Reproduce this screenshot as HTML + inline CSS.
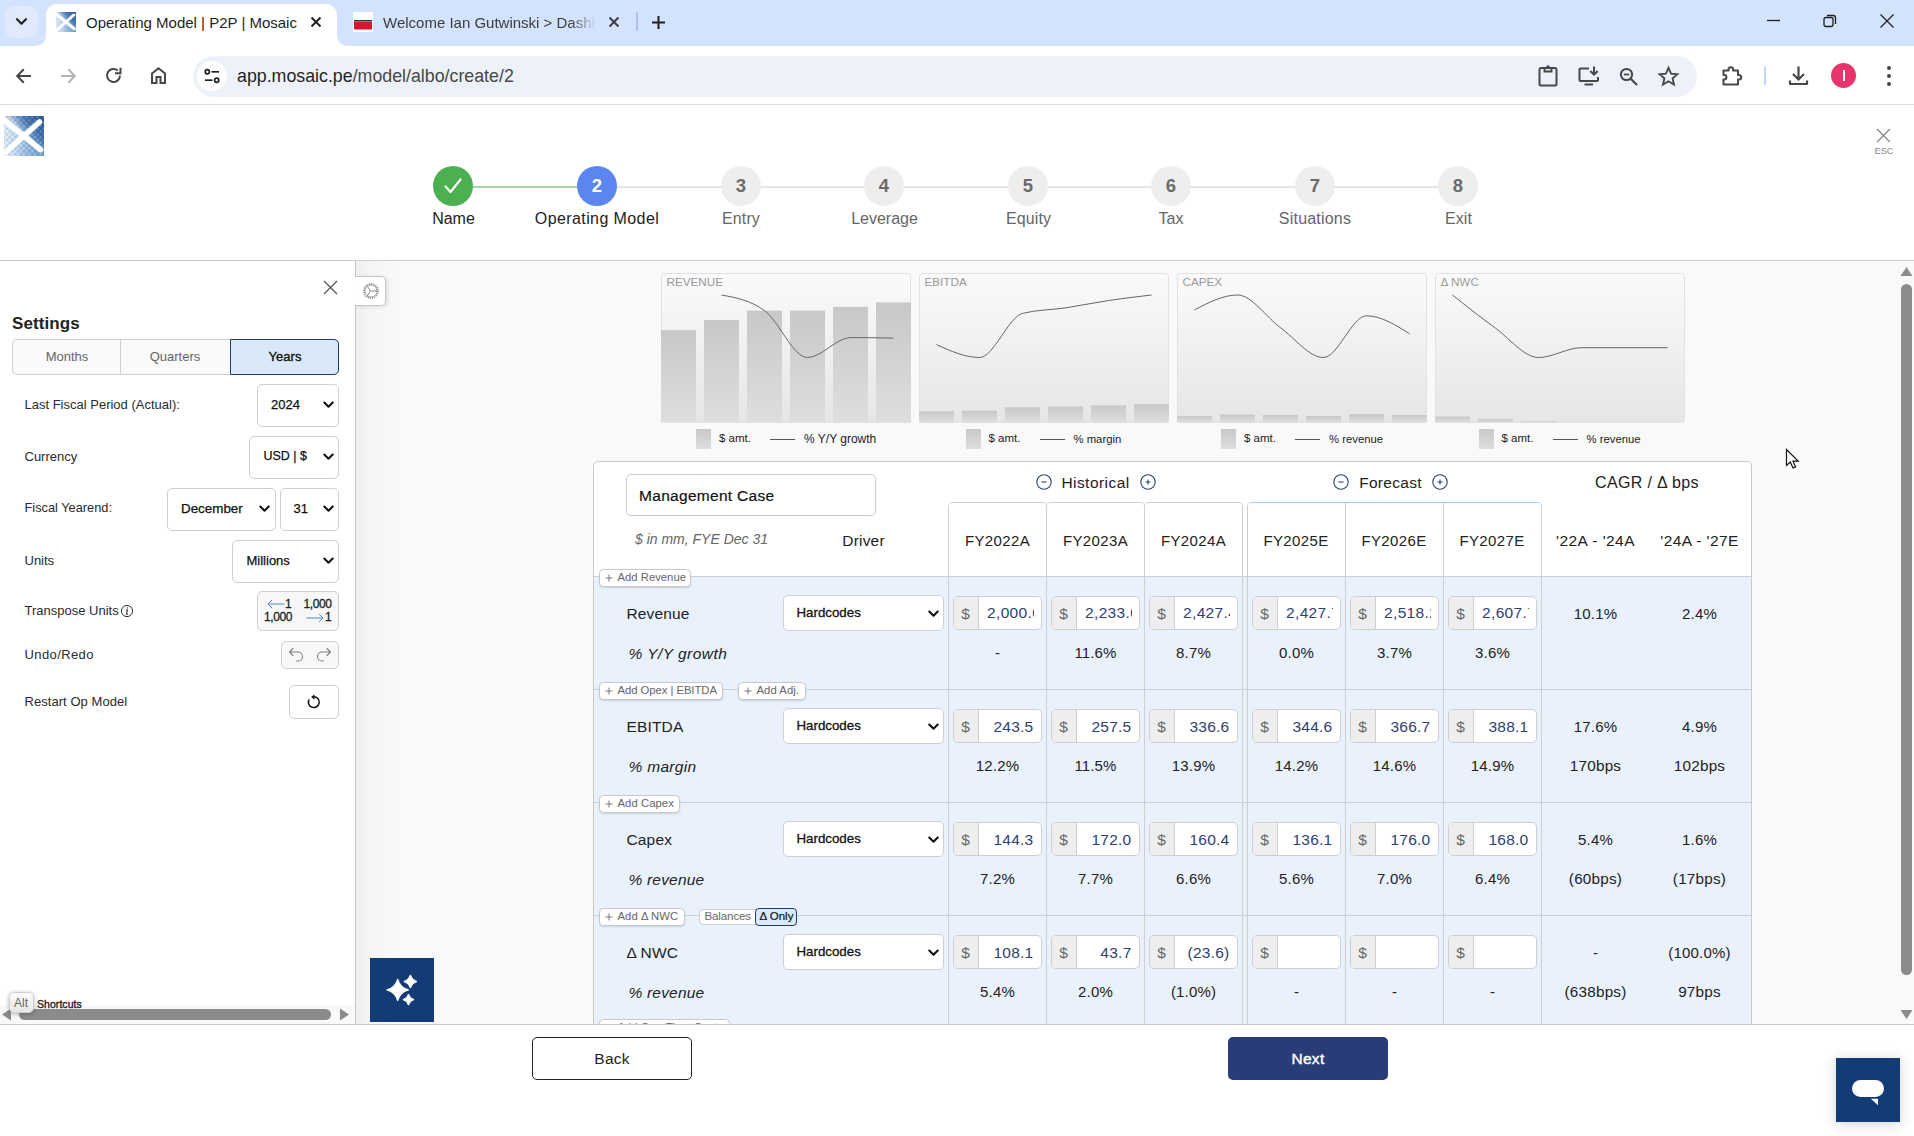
<!DOCTYPE html>
<html>
<head>
<meta charset="utf-8">
<title>Operating Model | P2P | Mosaic</title>
<style>
*{box-sizing:border-box;margin:0;padding:0}
html,body{width:1914px;height:1136px;overflow:hidden;background:#fff;font-family:"Liberation Sans",sans-serif;color:#222}
.abs{position:absolute}
#root{position:relative;width:1914px;height:1136px;overflow:hidden}
.t{position:absolute;white-space:nowrap;line-height:1}
.c{transform:translateX(-50%)}
/* chrome */
#tabbar{left:0;top:0;width:1914px;height:46px;background:#d3e3fd}
#toolbar{left:0;top:46.500px;width:1914px;height:58px;background:#fff;border-radius:0 9px 0 0}
#tbline{left:0;top:104px;width:1914px;height:1px;background:#dcdcdc}
#omni{left:193px;top:56px;width:1504px;height:41px;border-radius:21px;background:#edf2fa}
/* app */
#hdrline{left:0;top:259.500px;width:1914px;height:1.500px;background:#cbcbcb}
#main{left:356px;top:261px;width:1558px;height:763px;background:linear-gradient(90deg,#efefef 0,#f5f5f5 14px,#f9f9f9 40px);overflow:hidden}
#left{left:0;top:261px;width:356px;height:763px;background:#fff;border-right:1px solid #c4c4c4;overflow:hidden}
#botline{left:0;top:1024px;width:1914px;height:1px;background:#c8c8c8}
#bottom{left:0;top:1025px;width:1914px;height:111px;background:#fff}
.sel{position:absolute;border:1px solid #cfcfcf;border-radius:5px;background:#fff}
</style>
</head>
<body>
<div id="root">

<!-- ================= BROWSER CHROME ================= -->
<div id="tabbar" class="abs"></div>
<div id="toolbar" class="abs"></div>
<div id="tbline" class="abs"></div>
<div id="omni" class="abs"></div>
<!--CHROME_START-->
<!-- tab search chevron -->
<div class="abs" style="left:5px;top:6px;width:33px;height:32px;border-radius:9px;background:#e1eafc"></div>
<svg class="abs" style="left:15px;top:16px" width="13" height="12" viewBox="0 0 13 12"><path d="M2 3.2 L6.5 7.7 L11 3.2" fill="none" stroke="#1f1f1f" stroke-width="2.1" stroke-linecap="round" stroke-linejoin="round"/></svg>
<!-- active tab -->
<div class="abs" style="left:46px;top:4px;width:291px;height:43px;background:#fff;border-radius:11px 11px 0 0"></div>
<svg class="abs" style="left:36px;top:36px" width="10" height="10" viewBox="0 0 10 10"><path d="M10 0 V10 H0 A10 10 0 0 0 10 0Z" fill="#fff"/></svg>
<svg class="abs" style="left:337px;top:36px" width="10" height="10" viewBox="0 0 10 10"><path d="M0 0 V10 H10 A10 10 0 0 1 0 0Z" fill="#fff"/></svg>
<!-- favicon 1 (mosaic X) -->
<svg class="abs" style="left:56px;top:12px" width="20" height="20" viewBox="0 0 40 40"><rect width="40" height="40" fill="url(#lg1)"/><rect width="40" height="40" fill="url(#lg2)"/><rect width="40" height="40" fill="url(#mos)"/><path d="M0 4 L36.500 33.500" stroke="#fff" stroke-width="6" stroke-linecap="round"/><path d="M35.500 6 L1.500 36.500" stroke="#fff" stroke-width="6" stroke-linecap="round"/></svg>
<div class="t" style="left:86px;top:15px;font-size:15px;color:#1f1f1f">Operating Model | P2P | Mosaic</div>
<svg class="abs" style="left:310px;top:16px" width="12" height="12" viewBox="0 0 12 12"><path d="M1.5 1.5 L10.5 10.5 M10.5 1.5 L1.5 10.5" stroke="#1f1f1f" stroke-width="1.9"/></svg>
<!-- tab 2 -->
<svg class="abs" style="left:353px;top:12px" width="20" height="20" viewBox="0 0 20 20"><rect width="20" height="20" fill="#fff"/><rect x="1" y="8" width="18" height="1.6" fill="#333"/><rect x="1" y="10" width="18" height="7.5" fill="#d6182e"/></svg>
<div class="t" style="left:383px;top:15px;font-size:15px;color:#3c3c3c;width:213px;overflow:hidden;-webkit-mask-image:linear-gradient(90deg,#000 88%,transparent 100%);mask-image:linear-gradient(90deg,#000 88%,transparent 100%)">Welcome Ian Gutwinski &gt; Dashboard</div>
<svg class="abs" style="left:608px;top:16px" width="12" height="12" viewBox="0 0 12 12"><path d="M1.5 1.5 L10.5 10.5 M10.5 1.5 L1.5 10.5" stroke="#3c3c3c" stroke-width="1.9"/></svg>
<div class="abs" style="left:636px;top:12px;width:2px;height:19px;background:#a9c1ee;border-radius:1px"></div>
<svg class="abs" style="left:651px;top:15px" width="15" height="15" viewBox="0 0 15 15"><path d="M7.5 1 V14 M1 7.5 H14" stroke="#1f1f1f" stroke-width="2"/></svg>
<!-- window controls -->
<svg class="abs" style="left:1765px;top:12px" width="18" height="18" viewBox="0 0 18 18"><path d="M2 8.5 H15" stroke="#1f1f1f" stroke-width="1.3"/></svg>
<svg class="abs" style="left:1821px;top:12px" width="18" height="18" viewBox="0 0 18 18"><rect x="3" y="5.5" width="9" height="9" rx="2" fill="none" stroke="#1f1f1f" stroke-width="1.3"/><path d="M6 3.5 H12 A2.5 2.5 0 0 1 14.500 6 V12" fill="none" stroke="#1f1f1f" stroke-width="1.3"/></svg>
<svg class="abs" style="left:1878px;top:12px" width="18" height="18" viewBox="0 0 18 18"><path d="M2.500 2.500 L15.500 15.500 M15.500 2.500 L2.500 15.500" stroke="#1f1f1f" stroke-width="1.3"/></svg>
<!-- toolbar nav icons -->
<svg class="abs" style="left:14px;top:66px" width="20" height="20" viewBox="0 0 20 20"><path d="M17 10 H3.5 M9.800 3.300 L3.200 10 L9.800 16.700" fill="none" stroke="#474747" stroke-width="2"/></svg>
<svg class="abs" style="left:58px;top:66px" width="20" height="20" viewBox="0 0 20 20"><path d="M3 10 H16.500 M10.200 3.300 L16.800 10 L10.200 16.700" fill="none" stroke="#b4b4b4" stroke-width="2"/></svg>
<svg class="abs" style="left:103px;top:65px" width="21" height="21" viewBox="0 0 21 21"><path d="M17 10.500 A6.500 6.500 0 1 1 14.800 5.600" fill="none" stroke="#474747" stroke-width="2"/><path d="M17.500 2.800 V8.300 H12" fill="none" stroke="#474747" stroke-width="2"/></svg>
<svg class="abs" style="left:148px;top:65px" width="21" height="21" viewBox="0 0 21 21"><path d="M4 18 V8.500 L10.500 3.300 L17 8.500 V18 H12.500 V12 H8.500 V18 Z" fill="none" stroke="#474747" stroke-width="2"/></svg>
<!-- omnibox site info -->
<div class="abs" style="left:197px;top:61px;width:30px;height:30px;border-radius:15px;background:#fff"></div>
<svg class="abs" style="left:203px;top:67px" width="18" height="18" viewBox="0 0 18 18"><circle cx="4.300" cy="4.800" r="2.100" fill="none" stroke="#1f1f1f" stroke-width="1.700"/><path d="M8.500 4.800 H16" stroke="#1f1f1f" stroke-width="1.700"/><circle cx="13.700" cy="13.200" r="2.100" fill="none" stroke="#1f1f1f" stroke-width="1.700"/><path d="M2 13.200 H9.500" stroke="#1f1f1f" stroke-width="1.700"/></svg>
<div class="t" style="left:237px;top:68px;font-size:17.8px;color:#1f1f1f">app.mosaic.pe<span style="color:#474747">/model/albo/create/2</span></div>
<!-- omnibox right icons -->
<svg class="abs" style="left:1537px;top:64px" width="22" height="24" viewBox="0 0 22 24"><rect x="2.500" y="4" width="17" height="17.500" rx="1.500" fill="none" stroke="#474747" stroke-width="2"/><path d="M7.500 4 V7.500 H14.500 V4" fill="none" stroke="#474747" stroke-width="2"/><circle cx="11" cy="3" r="1.800" fill="#474747"/></svg>
<svg class="abs" style="left:1577px;top:64px" width="24" height="24" viewBox="0 0 24 24"><path d="M12 4.500 H3.500 A1 1 0 0 0 2.500 5.500 V16 A1 1 0 0 0 3.500 17 H20 A1 1 0 0 0 21 16 V13" fill="none" stroke="#474747" stroke-width="2"/><path d="M7.500 20.500 H16" stroke="#474747" stroke-width="2"/><path d="M17 2.500 V10.500 M13.300 7 L17 10.700 L20.700 7" fill="none" stroke="#474747" stroke-width="2"/></svg>
<svg class="abs" style="left:1618px;top:66px" width="22" height="22" viewBox="0 0 22 22"><circle cx="8.500" cy="8.500" r="5.600" fill="none" stroke="#474747" stroke-width="2"/><path d="M12.700 12.700 L19 19" stroke="#474747" stroke-width="2.200"/><path d="M5.800 8.500 H11.200" stroke="#474747" stroke-width="1.800"/></svg>
<svg class="abs" style="left:1657px;top:65px" width="23" height="22" viewBox="0 0 23 22"><path d="M11.500 2.800 L14.100 8.600 L20.400 9.200 L15.600 13.400 L17 19.600 L11.500 16.300 L6 19.600 L7.400 13.400 L2.600 9.200 L8.900 8.600 Z" fill="none" stroke="#474747" stroke-width="1.900" stroke-linejoin="miter"/></svg>
<svg class="abs" style="left:1720px;top:64px" width="25" height="24" viewBox="0 0 25 24"><path d="M3.500 6.500 H8.500 V5.500 A2.300 2.300 0 0 1 13.100 5.500 V6.500 H18 V11 H19 A2.300 2.300 0 0 1 19 15.600 H18 V20.500 H3.500 V15.500 H4.200 A2.200 2.200 0 0 0 4.200 11.100 H3.500 Z" fill="none" stroke="#474747" stroke-width="2" stroke-linejoin="round"/></svg>
<div class="abs" style="left:1764px;top:66px;width:2px;height:19px;background:#c4d5f3;border-radius:1px"></div>
<svg class="abs" style="left:1787px;top:64px" width="23" height="24" viewBox="0 0 23 24"><path d="M11.500 2.500 V15 M6 10 L11.500 15.500 L17 10" fill="none" stroke="#474747" stroke-width="2.200"/><path d="M3 16.500 V20 H20 V16.500" fill="none" stroke="#474747" stroke-width="2.200" stroke-linejoin="round"/></svg>
<div class="abs" style="left:1831px;top:63px;width:25px;height:25px;border-radius:13px;background:#e8336d"></div>
<div class="abs" style="left:1843px;top:70px;width:1.500px;height:11px;background:#fff"></div>
<div class="abs" style="left:1887px;top:66px;width:4px;height:4px;border-radius:2px;background:#474747"></div>
<div class="abs" style="left:1887px;top:74px;width:4px;height:4px;border-radius:2px;background:#474747"></div>
<div class="abs" style="left:1887px;top:82px;width:4px;height:4px;border-radius:2px;background:#474747"></div>
<!--CHROME_END-->

<!-- ================= APP HEADER ================= -->
<!--HEADER_START-->
<svg class="abs" style="left:4px;top:116px" width="40" height="40" viewBox="0 0 40 40">
<defs>
<linearGradient id="lg1" x1="0" y1="0" x2="1" y2="0"><stop offset="0" stop-color="#dfeaf6"/><stop offset=".3" stop-color="#c2d8ee"/><stop offset=".6" stop-color="#8fb6dc"/><stop offset="1" stop-color="#6a9ccd"/></linearGradient>
<linearGradient id="lg2" x1="0" y1="1" x2="1" y2="0"><stop offset=".5" stop-color="#1f4f93" stop-opacity="0"/><stop offset=".72" stop-color="#23549a" stop-opacity=".7"/><stop offset="1" stop-color="#1d4a8e" stop-opacity=".9"/></linearGradient>
<pattern id="mos" width="4" height="4" patternUnits="userSpaceOnUse" patternTransform="rotate(45)"><rect width="2" height="2" fill="#fff" opacity=".22"/><rect x="2" y="2" width="2" height="2" fill="#1d4a8e" opacity=".16"/></pattern>
</defs>
<rect width="40" height="40" fill="url(#lg1)"/><rect width="40" height="40" fill="url(#lg2)"/><rect width="40" height="40" fill="url(#mos)"/>
<path d="M0 4 L36.500 33.500" stroke="#fff" stroke-width="5.600" stroke-linecap="round"/>
<path d="M35.500 6 L1.500 36.500" stroke="#fff" stroke-width="5.600" stroke-linecap="round"/>
</svg>
<!-- ESC close -->
<svg class="abs" style="left:1876px;top:128px" width="15" height="15" viewBox="0 0 15 15"><path d="M1 1 L14 14 M14 1 L1 14" stroke="#8a8a8a" stroke-width="1.400"/></svg>
<div class="t" style="left:1874.500px;top:147px;font-size:9.200px;color:#8a8a8a">ESC</div>
<!-- stepper lines -->
<div class="abs" style="left:473px;top:186px;width:104px;height:2px;background:#a5d6a7"></div>
<div class="abs" style="left:617px;top:186px;width:821px;height:2px;background:#e4e4e4"></div>
<!-- circles -->
<div class="abs" style="left:433px;top:166px;width:40px;height:40px;border-radius:20px;background:#4caf50"></div>
<svg class="abs" style="left:442px;top:175px" width="22" height="22" viewBox="0 0 22 22"><path d="M3.500 11.500 L8.500 17 L18.500 4.500" fill="none" stroke="#fff" stroke-width="2.200" stroke-linecap="round" stroke-linejoin="round"/></svg>
<div class="abs" style="left:577px;top:166px;width:40px;height:40px;border-radius:20px;background:#5b86ee"></div>
<div class="t c" style="left:597px;top:176.500px;font-size:18.500px;font-weight:700;color:#fff">2</div>
<div class="abs" style="left:721px;top:166px;width:40px;height:40px;border-radius:20px;background:#eeeeee"></div>
<div class="t c" style="left:741px;top:176.500px;font-size:18.500px;font-weight:700;color:#6b6b6b">3</div>
<div class="abs" style="left:864px;top:166px;width:40px;height:40px;border-radius:20px;background:#eeeeee"></div>
<div class="t c" style="left:884px;top:176.500px;font-size:18.500px;font-weight:700;color:#6b6b6b">4</div>
<div class="abs" style="left:1008px;top:166px;width:40px;height:40px;border-radius:20px;background:#eeeeee"></div>
<div class="t c" style="left:1028px;top:176.500px;font-size:18.500px;font-weight:700;color:#6b6b6b">5</div>
<div class="abs" style="left:1151px;top:166px;width:40px;height:40px;border-radius:20px;background:#eeeeee"></div>
<div class="t c" style="left:1171px;top:176.500px;font-size:18.500px;font-weight:700;color:#6b6b6b">6</div>
<div class="abs" style="left:1295px;top:166px;width:40px;height:40px;border-radius:20px;background:#eeeeee"></div>
<div class="t c" style="left:1315px;top:176.500px;font-size:18.500px;font-weight:700;color:#6b6b6b">7</div>
<div class="abs" style="left:1438px;top:166px;width:40px;height:40px;border-radius:20px;background:#eeeeee"></div>
<div class="t c" style="left:1458px;top:176.500px;font-size:18.500px;font-weight:700;color:#6b6b6b">8</div>
<!-- labels -->
<div class="t c" style="left:453.500px;top:210.800px;font-size:16px;color:#222">Name</div>
<div class="t c" style="left:597px;top:210.800px;font-size:16px;color:#222;letter-spacing:.4px">Operating Model</div>
<div class="t c" style="left:741px;top:210.800px;font-size:16px;color:#666;letter-spacing:.1px">Entry</div>
<div class="t c" style="left:884.500px;top:210.800px;font-size:16px;color:#666">Leverage</div>
<div class="t c" style="left:1028.500px;top:210.800px;font-size:16px;color:#666;letter-spacing:.1px">Equity</div>
<div class="t c" style="left:1171px;top:210.800px;font-size:16px;color:#666;letter-spacing:.1px">Tax</div>
<div class="t c" style="left:1315px;top:210.800px;font-size:16px;color:#666;letter-spacing:.2px">Situations</div>
<div class="t c" style="left:1458.500px;top:210.800px;font-size:16px;color:#666;letter-spacing:.1px">Exit</div>
<!--HEADER_END-->
<div id="hdrline" class="abs"></div>

<!-- ================= MAIN ================= -->
<div id="main" class="abs">
<!--MAIN_START-->
<div class="abs" style="left:-356px;top:-261px;width:1914px;height:1136px">
<svg class="abs" style="left:0;top:0" width="1914" height="1136" viewBox="0 0 1914 1136"><defs><linearGradient id="cbg" x1="0" y1="0" x2="0" y2="1"><stop offset="0" stop-color="#fafafa"/><stop offset="1" stop-color="#e6e6e6"/></linearGradient><linearGradient id="bar" x1="0" y1="0" x2="0" y2="1"><stop offset="0" stop-color="#c8c8c8"/><stop offset="1" stop-color="#dedede"/></linearGradient></defs>
<rect x="661.5" y="273.5" width="249" height="149" rx="3" fill="url(#cbg)" stroke="#e2e2e2"/>
<rect x="661" y="330.2" width="35" height="92.3" fill="url(#bar)"/>
<rect x="704" y="320" width="35" height="102.5" fill="url(#bar)"/>
<rect x="747" y="310.6" width="35" height="111.9" fill="url(#bar)"/>
<rect x="790" y="310.6" width="35" height="111.9" fill="url(#bar)"/>
<rect x="833" y="306.8" width="35" height="115.7" fill="url(#bar)"/>
<rect x="876" y="302.4" width="35" height="120.1" fill="url(#bar)"/>
<path d="M721.5 295.0 C735.8 297.6 750.2 300.2 764.5 310.6 C778.8 321.0 793.2 357.5 807.5 357.5 C821.8 357.5 836.2 337.6 850.5 337.6 C864.8 337.6 879.2 337.8 893.5 338.1" fill="none" stroke="#666" stroke-width="1"/>
<rect x="696" y="429" width="15" height="20" fill="url(#bar)"/>
<path d="M770 439.5 H795" stroke="#555" stroke-width="1"/>
<rect x="919.5" y="273.5" width="249" height="149" rx="3" fill="url(#cbg)" stroke="#e2e2e2"/>
<rect x="919" y="411.3" width="35" height="11.2" fill="url(#bar)"/>
<rect x="962" y="410.7" width="35" height="11.8" fill="url(#bar)"/>
<rect x="1005" y="407.2" width="35" height="15.3" fill="url(#bar)"/>
<rect x="1048" y="406.6" width="35" height="15.9" fill="url(#bar)"/>
<rect x="1091" y="405.4" width="35" height="17.1" fill="url(#bar)"/>
<rect x="1134" y="404.2" width="35" height="18.3" fill="url(#bar)"/>
<path d="M936.5 344.6 C950.8 351.1 965.2 357.5 979.5 357.5 C993.8 357.5 1008.2 317.1 1022.5 313.4 C1036.8 309.7 1051.2 310.0 1065.5 307.9 C1079.8 305.7 1094.2 302.7 1108.5 300.5 C1122.8 298.4 1137.2 296.7 1151.5 295.0" fill="none" stroke="#666" stroke-width="1"/>
<rect x="966" y="429" width="15" height="20" fill="url(#bar)"/>
<path d="M1040 439.5 H1065" stroke="#555" stroke-width="1"/>
<rect x="1177.5" y="273.5" width="249" height="149" rx="3" fill="url(#cbg)" stroke="#e2e2e2"/>
<rect x="1177" y="416" width="35" height="6.5" fill="url(#bar)"/>
<rect x="1220" y="414.5" width="35" height="8.0" fill="url(#bar)"/>
<rect x="1263" y="415" width="35" height="7.5" fill="url(#bar)"/>
<rect x="1306" y="416" width="35" height="6.5" fill="url(#bar)"/>
<rect x="1349" y="414.2" width="35" height="8.3" fill="url(#bar)"/>
<rect x="1392" y="415" width="35" height="7.5" fill="url(#bar)"/>
<path d="M1194.5 309.9 C1208.8 302.4 1223.2 295.0 1237.5 295.0 C1251.8 295.0 1266.2 317.3 1280.5 327.7 C1294.8 338.2 1309.2 357.5 1323.5 357.5 C1337.8 357.5 1352.2 315.8 1366.5 315.8 C1380.8 315.8 1395.2 324.8 1409.5 333.7" fill="none" stroke="#666" stroke-width="1"/>
<rect x="1221" y="429" width="15" height="20" fill="url(#bar)"/>
<path d="M1295 439.5 H1320" stroke="#555" stroke-width="1"/>
<rect x="1435.5" y="273.5" width="249" height="149" rx="3" fill="url(#cbg)" stroke="#e2e2e2"/>
<rect x="1435" y="416.5" width="35" height="6.0" fill="url(#bar)"/>
<rect x="1478" y="418.9" width="35" height="3.6" fill="url(#bar)"/>
<rect x="1521" y="421.2" width="35" height="1.3" fill="url(#bar)"/>
<path d="M1452.5 295.0 C1466.8 306.4 1481.2 317.8 1495.5 328.2 C1509.8 338.6 1524.2 357.5 1538.5 357.5 C1552.8 357.5 1567.2 347.7 1581.5 347.7 C1595.8 347.7 1610.2 347.7 1624.5 347.7 C1638.8 347.7 1653.2 347.7 1667.5 347.7" fill="none" stroke="#666" stroke-width="1"/>
<rect x="1479" y="429" width="15" height="20" fill="url(#bar)"/>
<path d="M1553 439.5 H1578" stroke="#555" stroke-width="1"/>
</svg>
<div class="t" style="left:666.5px;top:276.25px;font-size:11.7px;color:#999;letter-spacing:0px;">REVENUE</div>
<div class="t" style="left:719px;top:433.45px;font-size:11.5px;color:#222;letter-spacing:0px;">$ amt.</div>
<div class="t" style="left:804px;top:433.2px;font-size:12px;color:#222;letter-spacing:0px;">% Y/Y growth</div>
<div class="t" style="left:924.5px;top:276.25px;font-size:11.7px;color:#999;letter-spacing:0px;">EBITDA</div>
<div class="t" style="left:988.5px;top:433.45px;font-size:11.5px;color:#222;letter-spacing:0px;">$ amt.</div>
<div class="t" style="left:1073.5px;top:433.55px;font-size:11.3px;color:#222;letter-spacing:0px;">% margin</div>
<div class="t" style="left:1182.5px;top:276.25px;font-size:11.7px;color:#999;letter-spacing:0px;">CAPEX</div>
<div class="t" style="left:1244px;top:433.45px;font-size:11.5px;color:#222;letter-spacing:0px;">$ amt.</div>
<div class="t" style="left:1329px;top:433.55px;font-size:11.3px;color:#222;letter-spacing:0px;">% revenue</div>
<div class="t" style="left:1440.5px;top:276.25px;font-size:11.7px;color:#999;letter-spacing:0px;">Δ NWC</div>
<div class="t" style="left:1501.5px;top:433.45px;font-size:11.5px;color:#222;letter-spacing:0px;">$ amt.</div>
<div class="t" style="left:1586.5px;top:433.55px;font-size:11.3px;color:#222;letter-spacing:0px;">% revenue</div>
<div class="abs" style="left:593px;top:461px;width:1159px;height:640px;border:1px solid #cacaca;border-radius:5px;background:#fff"></div>
<div class="abs" style="left:594px;top:577px;width:1157px;height:520px;background:#e9f1fc"></div>
<div class="abs" style="left:948px;top:502px;width:99px;height:600px;border:1px solid #cfcfcf;border-bottom:0;border-radius:5px 5px 0 0"></div>
<div class="abs" style="left:949px;top:503px;width:97px;height:74px;background:#fff;border-radius:4px 4px 0 0"></div>
<div class="abs" style="left:1046px;top:502px;width:99px;height:600px;border:1px solid #cfcfcf;border-bottom:0;border-radius:5px 5px 0 0"></div>
<div class="abs" style="left:1047px;top:503px;width:97px;height:74px;background:#fff;border-radius:4px 4px 0 0"></div>
<div class="abs" style="left:1144px;top:502px;width:99px;height:600px;border:1px solid #cfcfcf;border-bottom:0;border-radius:5px 5px 0 0"></div>
<div class="abs" style="left:1145px;top:503px;width:97px;height:74px;background:#fff;border-radius:4px 4px 0 0"></div>
<div class="abs" style="left:1247px;top:502px;width:295px;height:600px;border:1px solid #cfcfcf;border-top-color:#9fcdf2;border-bottom:0;border-radius:5px 5px 0 0"></div>
<div class="abs" style="left:1248px;top:503px;width:293px;height:74px;background:#fff;border-radius:4px 4px 0 0"></div>
<div class="abs" style="left:1345px;top:503px;width:1px;height:600px;background:#cfcfcf"></div>
<div class="abs" style="left:1443px;top:503px;width:1px;height:600px;background:#cfcfcf"></div>
<div class="abs" style="left:594px;top:576px;width:1157px;height:1px;background:#cdd1d8"></div>
<div class="abs" style="left:594px;top:689px;width:1157px;height:1px;background:#cdd1d8"></div>
<div class="abs" style="left:594px;top:802px;width:1157px;height:1px;background:#cdd1d8"></div>
<div class="abs" style="left:594px;top:915px;width:1157px;height:1px;background:#cdd1d8"></div>
<div class="abs" style="left:594px;top:1028px;width:1157px;height:1px;background:#cdd1d8"></div>
<div class="abs" style="left:626px;top:474px;width:250px;height:42px;border:1px solid #ccc;border-radius:5px;background:#fff"></div>
<div class="t" style="left:639px;top:488.25px;font-size:15.5px;color:#111;letter-spacing:0.3px;-webkit-text-stroke:.2px #111;">Management Case</div>
<div class="t" style="left:635px;top:531.5px;font-size:14px;color:#666;letter-spacing:0px;font-style:italic;">$ in mm, FYE Dec 31</div>
<div class="t c" style="left:863.5px;top:532.95px;font-size:15.5px;color:#222;letter-spacing:0.2px;">Driver</div>
<svg class="abs" style="left:1035.5px;top:473.7px" width="16" height="16" viewBox="0 0 16 16"><circle cx="8" cy="8" r="7.200" fill="none" stroke="#2c3e70" stroke-width="1.100"/><path d="M5.500 8 H10.500" stroke="#2c3e70" stroke-width="1.100"/></svg>
<svg class="abs" style="left:1139.5px;top:473.7px" width="16" height="16" viewBox="0 0 16 16"><circle cx="8" cy="8" r="7.200" fill="none" stroke="#2c3e70" stroke-width="1.100"/><path d="M5.500 8 H10.500 M8 5.500 V10.500" stroke="#2c3e70" stroke-width="1.100"/></svg>
<div class="t c" style="left:1095.5px;top:474.95px;font-size:15.5px;color:#222;letter-spacing:0.45px;">Historical</div>
<svg class="abs" style="left:1333.4px;top:473.7px" width="16" height="16" viewBox="0 0 16 16"><circle cx="8" cy="8" r="7.200" fill="none" stroke="#2c3e70" stroke-width="1.100"/><path d="M5.500 8 H10.500" stroke="#2c3e70" stroke-width="1.100"/></svg>
<svg class="abs" style="left:1431.6px;top:473.7px" width="16" height="16" viewBox="0 0 16 16"><circle cx="8" cy="8" r="7.200" fill="none" stroke="#2c3e70" stroke-width="1.100"/><path d="M5.500 8 H10.500 M8 5.500 V10.500" stroke="#2c3e70" stroke-width="1.100"/></svg>
<div class="t c" style="left:1390.5px;top:474.95px;font-size:15.5px;color:#222;letter-spacing:0.3px;">Forecast</div>
<div class="t c" style="left:1647px;top:474.7px;font-size:16px;color:#222;letter-spacing:0.35px;">CAGR / Δ bps</div>
<div class="t c" style="left:997.5px;top:532.5px;font-size:15px;color:#222;letter-spacing:0.35px;">FY2022A</div>
<div class="t c" style="left:1095.5px;top:532.5px;font-size:15px;color:#222;letter-spacing:0.35px;">FY2023A</div>
<div class="t c" style="left:1193.5px;top:532.5px;font-size:15px;color:#222;letter-spacing:0.35px;">FY2024A</div>
<div class="t c" style="left:1296px;top:532.5px;font-size:15px;color:#222;letter-spacing:0.35px;">FY2025E</div>
<div class="t c" style="left:1394px;top:532.5px;font-size:15px;color:#222;letter-spacing:0.35px;">FY2026E</div>
<div class="t c" style="left:1492px;top:532.5px;font-size:15px;color:#222;letter-spacing:0.35px;">FY2027E</div>
<div class="t c" style="left:1595.5px;top:532.95px;font-size:15.5px;color:#222;letter-spacing:0.45px;">'22A - '24A</div>
<div class="t c" style="left:1699.5px;top:532.95px;font-size:15.5px;color:#222;letter-spacing:0.4px;">'24A - '27E</div>
<div class="abs" style="left:598.5px;top:569.0px;width:92px;height:17.5px;border:1px solid #c9c9c9;border-radius:4.500px;background:#fff;box-shadow:0 1px 2px rgba(0,0,0,.14)"></div>
<svg class="abs" style="left:604.5px;top:573.75px" width="8" height="8" viewBox="0 0 8 8"><path d="M4 .5 V7.500 M.5 4 H7.500" stroke="#777" stroke-width="1"/></svg>
<div class="t" style="left:617.5px;top:572.4px;font-size:11.3px;color:#666;letter-spacing:0.0px;">Add Revenue</div>
<div class="abs" style="left:598.5px;top:682.0px;width:124px;height:17.5px;border:1px solid #c9c9c9;border-radius:4.500px;background:#fff;box-shadow:0 1px 2px rgba(0,0,0,.14)"></div>
<svg class="abs" style="left:604.5px;top:686.75px" width="8" height="8" viewBox="0 0 8 8"><path d="M4 .5 V7.500 M.5 4 H7.500" stroke="#777" stroke-width="1"/></svg>
<div class="t" style="left:617.5px;top:685.4px;font-size:11.3px;color:#666;letter-spacing:-0.05px;">Add Opex | EBITDA</div>
<div class="abs" style="left:737.5px;top:682.0px;width:68px;height:17.5px;border:1px solid #c9c9c9;border-radius:4.500px;background:#fff;box-shadow:0 1px 2px rgba(0,0,0,.14)"></div>
<svg class="abs" style="left:743.5px;top:686.75px" width="8" height="8" viewBox="0 0 8 8"><path d="M4 .5 V7.500 M.5 4 H7.500" stroke="#777" stroke-width="1"/></svg>
<div class="t" style="left:756.5px;top:685.4px;font-size:11.3px;color:#666;letter-spacing:0.05px;">Add Adj.</div>
<div class="abs" style="left:598.5px;top:795.0px;width:81px;height:17.5px;border:1px solid #c9c9c9;border-radius:4.500px;background:#fff;box-shadow:0 1px 2px rgba(0,0,0,.14)"></div>
<svg class="abs" style="left:604.5px;top:799.75px" width="8" height="8" viewBox="0 0 8 8"><path d="M4 .5 V7.500 M.5 4 H7.500" stroke="#777" stroke-width="1"/></svg>
<div class="t" style="left:617.5px;top:798.4px;font-size:11.3px;color:#666;letter-spacing:0.05px;">Add Capex</div>
<div class="abs" style="left:598.5px;top:908.0px;width:86px;height:17.5px;border:1px solid #c9c9c9;border-radius:4.500px;background:#fff;box-shadow:0 1px 2px rgba(0,0,0,.14)"></div>
<svg class="abs" style="left:604.5px;top:912.75px" width="8" height="8" viewBox="0 0 8 8"><path d="M4 .5 V7.500 M.5 4 H7.500" stroke="#777" stroke-width="1"/></svg>
<div class="t" style="left:617.5px;top:911.4px;font-size:11.3px;color:#666;letter-spacing:0.05px;">Add Δ NWC</div>
<div class="abs" style="left:598.5px;top:1018.5px;width:131px;height:18px;border:1px solid #c9c9c9;border-radius:4.500px;background:#fff;box-shadow:0 1px 2px rgba(0,0,0,.14)"></div>
<svg class="abs" style="left:604.5px;top:1023.5px" width="8" height="8" viewBox="0 0 8 8"><path d="M4 .5 V7.500 M.5 4 H7.500" stroke="#777" stroke-width="1"/></svg>
<div class="t" style="left:617.5px;top:1022.15px;font-size:11.3px;color:#666;letter-spacing:0px;">Add One-Time Cost</div>
<div class="abs" style="left:699px;top:908.500px;width:98px;height:16.500px;border:1px solid #cfcfcf;border-radius:4px;background:#fff"></div>
<div class="abs" style="left:754.500px;top:907.500px;width:42.500px;height:18.500px;border:1.500px solid #1d3c78;border-radius:4px;background:#d9e9f9"></div>
<div class="t" style="left:704.5px;top:911.25px;font-size:11.5px;color:#666;letter-spacing:-0.1px;">Balances</div>
<div class="t" style="left:759.5px;top:911.25px;font-size:11.5px;color:#111;letter-spacing:0px;-webkit-text-stroke:.2px #111;">Δ Only</div>
<div class="t" style="left:626.5px;top:605.75px;font-size:15.5px;color:#222;letter-spacing:0.15px;">Revenue</div>
<div class="t" style="left:628.5px;top:645.75px;font-size:15.5px;color:#222;letter-spacing:0.45px;font-style:italic;">% Y/Y growth</div>
<div class="abs" style="left:783px;top:595px;width:161px;height:36px;border:1px solid #cfcfcf;border-radius:5px;background:#fff"></div>
<div class="t" style="left:796.5px;top:606.15px;font-size:13.3px;color:#111;letter-spacing:0px;-webkit-text-stroke:.3px #111;">Hardcodes</div>
<svg class="abs" style="left:928px;top:609.5px" width="11" height="8" viewBox="0 0 11 8"><path d="M1.300 1.500 L5.500 5.700 L9.700 1.500" fill="none" stroke="#111" stroke-width="2.100" stroke-linecap="round" stroke-linejoin="round"/></svg>
<div class="abs" style="left:953px;top:596px;width:89px;height:33.500px;border:1px solid #cfcfcf;border-radius:5px;background:#fff;overflow:hidden"><div class="abs" style="left:0;top:0;width:25px;height:33px;background:#eee;border-right:1px solid #cfcfcf"></div></div>
<div class="t c" style="left:965.5px;top:605.55px;font-size:15.5px;color:#666;letter-spacing:0px;">$</div>
<div class="abs" style="left:979px;top:597px;width:55px;height:31px;overflow:hidden"><div class="t" style="left:8px;top:7.75px;font-size:15.500px;color:#2f416f;letter-spacing:.35px">2,000.0</div></div>
<div class="t c" style="left:997.5px;top:645.3px;font-size:15px;color:#222;letter-spacing:0.15px;">-</div>
<div class="abs" style="left:1051px;top:596px;width:89px;height:33.500px;border:1px solid #cfcfcf;border-radius:5px;background:#fff;overflow:hidden"><div class="abs" style="left:0;top:0;width:25px;height:33px;background:#eee;border-right:1px solid #cfcfcf"></div></div>
<div class="t c" style="left:1063.5px;top:605.55px;font-size:15.5px;color:#666;letter-spacing:0px;">$</div>
<div class="abs" style="left:1077px;top:597px;width:55px;height:31px;overflow:hidden"><div class="t" style="left:8px;top:7.75px;font-size:15.500px;color:#2f416f;letter-spacing:.35px">2,233.0</div></div>
<div class="t c" style="left:1095.5px;top:645.3px;font-size:15px;color:#222;letter-spacing:0.15px;">11.6%</div>
<div class="abs" style="left:1149px;top:596px;width:89px;height:33.500px;border:1px solid #cfcfcf;border-radius:5px;background:#fff;overflow:hidden"><div class="abs" style="left:0;top:0;width:25px;height:33px;background:#eee;border-right:1px solid #cfcfcf"></div></div>
<div class="t c" style="left:1161.5px;top:605.55px;font-size:15.5px;color:#666;letter-spacing:0px;">$</div>
<div class="abs" style="left:1175px;top:597px;width:55px;height:31px;overflow:hidden"><div class="t" style="left:8px;top:7.75px;font-size:15.500px;color:#2f416f;letter-spacing:.35px">2,427.4</div></div>
<div class="t c" style="left:1193.5px;top:645.3px;font-size:15px;color:#222;letter-spacing:0.15px;">8.7%</div>
<div class="abs" style="left:1252px;top:596px;width:89px;height:33.500px;border:1px solid #cfcfcf;border-radius:5px;background:#fff;overflow:hidden"><div class="abs" style="left:0;top:0;width:25px;height:33px;background:#eee;border-right:1px solid #cfcfcf"></div></div>
<div class="t c" style="left:1264.5px;top:605.55px;font-size:15.5px;color:#666;letter-spacing:0px;">$</div>
<div class="abs" style="left:1278px;top:597px;width:55px;height:31px;overflow:hidden"><div class="t" style="left:8px;top:7.75px;font-size:15.500px;color:#2f416f;letter-spacing:.35px">2,427.7</div></div>
<div class="t c" style="left:1296.5px;top:645.3px;font-size:15px;color:#222;letter-spacing:0.15px;">0.0%</div>
<div class="abs" style="left:1350px;top:596px;width:89px;height:33.500px;border:1px solid #cfcfcf;border-radius:5px;background:#fff;overflow:hidden"><div class="abs" style="left:0;top:0;width:25px;height:33px;background:#eee;border-right:1px solid #cfcfcf"></div></div>
<div class="t c" style="left:1362.5px;top:605.55px;font-size:15.5px;color:#666;letter-spacing:0px;">$</div>
<div class="abs" style="left:1376px;top:597px;width:55px;height:31px;overflow:hidden"><div class="t" style="left:8px;top:7.75px;font-size:15.500px;color:#2f416f;letter-spacing:.35px">2,518.2</div></div>
<div class="t c" style="left:1394.5px;top:645.3px;font-size:15px;color:#222;letter-spacing:0.15px;">3.7%</div>
<div class="abs" style="left:1448px;top:596px;width:89px;height:33.500px;border:1px solid #cfcfcf;border-radius:5px;background:#fff;overflow:hidden"><div class="abs" style="left:0;top:0;width:25px;height:33px;background:#eee;border-right:1px solid #cfcfcf"></div></div>
<div class="t c" style="left:1460.5px;top:605.55px;font-size:15.5px;color:#666;letter-spacing:0px;">$</div>
<div class="abs" style="left:1474px;top:597px;width:55px;height:31px;overflow:hidden"><div class="t" style="left:8px;top:7.75px;font-size:15.500px;color:#2f416f;letter-spacing:.35px">2,607.7</div></div>
<div class="t c" style="left:1492.5px;top:645.3px;font-size:15px;color:#222;letter-spacing:0.15px;">3.6%</div>
<div class="t c" style="left:1595.5px;top:606.0px;font-size:15px;color:#222;letter-spacing:0.2px;">10.1%</div>
<div class="t c" style="left:1699.5px;top:606.0px;font-size:15px;color:#222;letter-spacing:0.2px;">2.4%</div>
<div class="t c" style="left:1595.5px;top:645.15px;font-size:15.3px;color:#222;letter-spacing:0.2px;"></div>
<div class="t c" style="left:1699.5px;top:645.15px;font-size:15.3px;color:#222;letter-spacing:0.2px;"></div>
<div class="t" style="left:626.5px;top:718.75px;font-size:15.5px;color:#222;letter-spacing:0.15px;">EBITDA</div>
<div class="t" style="left:628.5px;top:758.75px;font-size:15.5px;color:#222;letter-spacing:0.3px;font-style:italic;">% margin</div>
<div class="abs" style="left:783px;top:708px;width:161px;height:36px;border:1px solid #cfcfcf;border-radius:5px;background:#fff"></div>
<div class="t" style="left:796.5px;top:719.15px;font-size:13.3px;color:#111;letter-spacing:0px;-webkit-text-stroke:.3px #111;">Hardcodes</div>
<svg class="abs" style="left:928px;top:722.5px" width="11" height="8" viewBox="0 0 11 8"><path d="M1.300 1.500 L5.500 5.700 L9.700 1.500" fill="none" stroke="#111" stroke-width="2.100" stroke-linecap="round" stroke-linejoin="round"/></svg>
<div class="abs" style="left:953px;top:709px;width:89px;height:33.500px;border:1px solid #cfcfcf;border-radius:5px;background:#fff;overflow:hidden"><div class="abs" style="left:0;top:0;width:25px;height:33px;background:#eee;border-right:1px solid #cfcfcf"></div></div>
<div class="t c" style="left:965.5px;top:718.55px;font-size:15.5px;color:#666;letter-spacing:0px;">$</div>
<div class="t" style="left:1033.5px;top:718.55px;font-size:15.5px;color:#2f416f;letter-spacing:0.25px;transform:translateX(-100%);">243.5</div>
<div class="t c" style="left:997.5px;top:758.3px;font-size:15px;color:#222;letter-spacing:0.15px;">12.2%</div>
<div class="abs" style="left:1051px;top:709px;width:89px;height:33.500px;border:1px solid #cfcfcf;border-radius:5px;background:#fff;overflow:hidden"><div class="abs" style="left:0;top:0;width:25px;height:33px;background:#eee;border-right:1px solid #cfcfcf"></div></div>
<div class="t c" style="left:1063.5px;top:718.55px;font-size:15.5px;color:#666;letter-spacing:0px;">$</div>
<div class="t" style="left:1131.5px;top:718.55px;font-size:15.5px;color:#2f416f;letter-spacing:0.25px;transform:translateX(-100%);">257.5</div>
<div class="t c" style="left:1095.5px;top:758.3px;font-size:15px;color:#222;letter-spacing:0.15px;">11.5%</div>
<div class="abs" style="left:1149px;top:709px;width:89px;height:33.500px;border:1px solid #cfcfcf;border-radius:5px;background:#fff;overflow:hidden"><div class="abs" style="left:0;top:0;width:25px;height:33px;background:#eee;border-right:1px solid #cfcfcf"></div></div>
<div class="t c" style="left:1161.5px;top:718.55px;font-size:15.5px;color:#666;letter-spacing:0px;">$</div>
<div class="t" style="left:1229.5px;top:718.55px;font-size:15.5px;color:#2f416f;letter-spacing:0.25px;transform:translateX(-100%);">336.6</div>
<div class="t c" style="left:1193.5px;top:758.3px;font-size:15px;color:#222;letter-spacing:0.15px;">13.9%</div>
<div class="abs" style="left:1252px;top:709px;width:89px;height:33.500px;border:1px solid #cfcfcf;border-radius:5px;background:#fff;overflow:hidden"><div class="abs" style="left:0;top:0;width:25px;height:33px;background:#eee;border-right:1px solid #cfcfcf"></div></div>
<div class="t c" style="left:1264.5px;top:718.55px;font-size:15.5px;color:#666;letter-spacing:0px;">$</div>
<div class="t" style="left:1332.5px;top:718.55px;font-size:15.5px;color:#2f416f;letter-spacing:0.25px;transform:translateX(-100%);">344.6</div>
<div class="t c" style="left:1296.5px;top:758.3px;font-size:15px;color:#222;letter-spacing:0.15px;">14.2%</div>
<div class="abs" style="left:1350px;top:709px;width:89px;height:33.500px;border:1px solid #cfcfcf;border-radius:5px;background:#fff;overflow:hidden"><div class="abs" style="left:0;top:0;width:25px;height:33px;background:#eee;border-right:1px solid #cfcfcf"></div></div>
<div class="t c" style="left:1362.5px;top:718.55px;font-size:15.5px;color:#666;letter-spacing:0px;">$</div>
<div class="t" style="left:1430.5px;top:718.55px;font-size:15.5px;color:#2f416f;letter-spacing:0.25px;transform:translateX(-100%);">366.7</div>
<div class="t c" style="left:1394.5px;top:758.3px;font-size:15px;color:#222;letter-spacing:0.15px;">14.6%</div>
<div class="abs" style="left:1448px;top:709px;width:89px;height:33.500px;border:1px solid #cfcfcf;border-radius:5px;background:#fff;overflow:hidden"><div class="abs" style="left:0;top:0;width:25px;height:33px;background:#eee;border-right:1px solid #cfcfcf"></div></div>
<div class="t c" style="left:1460.5px;top:718.55px;font-size:15.5px;color:#666;letter-spacing:0px;">$</div>
<div class="t" style="left:1528.5px;top:718.55px;font-size:15.5px;color:#2f416f;letter-spacing:0.25px;transform:translateX(-100%);">388.1</div>
<div class="t c" style="left:1492.5px;top:758.3px;font-size:15px;color:#222;letter-spacing:0.15px;">14.9%</div>
<div class="t c" style="left:1595.5px;top:719.0px;font-size:15px;color:#222;letter-spacing:0.2px;">17.6%</div>
<div class="t c" style="left:1699.5px;top:719.0px;font-size:15px;color:#222;letter-spacing:0.2px;">4.9%</div>
<div class="t c" style="left:1595.5px;top:758.15px;font-size:15.3px;color:#222;letter-spacing:0.2px;">170bps</div>
<div class="t c" style="left:1699.5px;top:758.15px;font-size:15.3px;color:#222;letter-spacing:0.2px;">102bps</div>
<div class="t" style="left:626.5px;top:831.75px;font-size:15.5px;color:#222;letter-spacing:0.15px;">Capex</div>
<div class="t" style="left:628.5px;top:871.75px;font-size:15.5px;color:#222;letter-spacing:0.2px;font-style:italic;">% revenue</div>
<div class="abs" style="left:783px;top:821px;width:161px;height:36px;border:1px solid #cfcfcf;border-radius:5px;background:#fff"></div>
<div class="t" style="left:796.5px;top:832.15px;font-size:13.3px;color:#111;letter-spacing:0px;-webkit-text-stroke:.3px #111;">Hardcodes</div>
<svg class="abs" style="left:928px;top:835.5px" width="11" height="8" viewBox="0 0 11 8"><path d="M1.300 1.500 L5.500 5.700 L9.700 1.500" fill="none" stroke="#111" stroke-width="2.100" stroke-linecap="round" stroke-linejoin="round"/></svg>
<div class="abs" style="left:953px;top:822px;width:89px;height:33.500px;border:1px solid #cfcfcf;border-radius:5px;background:#fff;overflow:hidden"><div class="abs" style="left:0;top:0;width:25px;height:33px;background:#eee;border-right:1px solid #cfcfcf"></div></div>
<div class="t c" style="left:965.5px;top:831.55px;font-size:15.5px;color:#666;letter-spacing:0px;">$</div>
<div class="t" style="left:1033.5px;top:831.55px;font-size:15.5px;color:#2f416f;letter-spacing:0.25px;transform:translateX(-100%);">144.3</div>
<div class="t c" style="left:997.5px;top:871.3px;font-size:15px;color:#222;letter-spacing:0.15px;">7.2%</div>
<div class="abs" style="left:1051px;top:822px;width:89px;height:33.500px;border:1px solid #cfcfcf;border-radius:5px;background:#fff;overflow:hidden"><div class="abs" style="left:0;top:0;width:25px;height:33px;background:#eee;border-right:1px solid #cfcfcf"></div></div>
<div class="t c" style="left:1063.5px;top:831.55px;font-size:15.5px;color:#666;letter-spacing:0px;">$</div>
<div class="t" style="left:1131.5px;top:831.55px;font-size:15.5px;color:#2f416f;letter-spacing:0.25px;transform:translateX(-100%);">172.0</div>
<div class="t c" style="left:1095.5px;top:871.3px;font-size:15px;color:#222;letter-spacing:0.15px;">7.7%</div>
<div class="abs" style="left:1149px;top:822px;width:89px;height:33.500px;border:1px solid #cfcfcf;border-radius:5px;background:#fff;overflow:hidden"><div class="abs" style="left:0;top:0;width:25px;height:33px;background:#eee;border-right:1px solid #cfcfcf"></div></div>
<div class="t c" style="left:1161.5px;top:831.55px;font-size:15.5px;color:#666;letter-spacing:0px;">$</div>
<div class="t" style="left:1229.5px;top:831.55px;font-size:15.5px;color:#2f416f;letter-spacing:0.25px;transform:translateX(-100%);">160.4</div>
<div class="t c" style="left:1193.5px;top:871.3px;font-size:15px;color:#222;letter-spacing:0.15px;">6.6%</div>
<div class="abs" style="left:1252px;top:822px;width:89px;height:33.500px;border:1px solid #cfcfcf;border-radius:5px;background:#fff;overflow:hidden"><div class="abs" style="left:0;top:0;width:25px;height:33px;background:#eee;border-right:1px solid #cfcfcf"></div></div>
<div class="t c" style="left:1264.5px;top:831.55px;font-size:15.5px;color:#666;letter-spacing:0px;">$</div>
<div class="t" style="left:1332.5px;top:831.55px;font-size:15.5px;color:#2f416f;letter-spacing:0.25px;transform:translateX(-100%);">136.1</div>
<div class="t c" style="left:1296.5px;top:871.3px;font-size:15px;color:#222;letter-spacing:0.15px;">5.6%</div>
<div class="abs" style="left:1350px;top:822px;width:89px;height:33.500px;border:1px solid #cfcfcf;border-radius:5px;background:#fff;overflow:hidden"><div class="abs" style="left:0;top:0;width:25px;height:33px;background:#eee;border-right:1px solid #cfcfcf"></div></div>
<div class="t c" style="left:1362.5px;top:831.55px;font-size:15.5px;color:#666;letter-spacing:0px;">$</div>
<div class="t" style="left:1430.5px;top:831.55px;font-size:15.5px;color:#2f416f;letter-spacing:0.25px;transform:translateX(-100%);">176.0</div>
<div class="t c" style="left:1394.5px;top:871.3px;font-size:15px;color:#222;letter-spacing:0.15px;">7.0%</div>
<div class="abs" style="left:1448px;top:822px;width:89px;height:33.500px;border:1px solid #cfcfcf;border-radius:5px;background:#fff;overflow:hidden"><div class="abs" style="left:0;top:0;width:25px;height:33px;background:#eee;border-right:1px solid #cfcfcf"></div></div>
<div class="t c" style="left:1460.5px;top:831.55px;font-size:15.5px;color:#666;letter-spacing:0px;">$</div>
<div class="t" style="left:1528.5px;top:831.55px;font-size:15.5px;color:#2f416f;letter-spacing:0.25px;transform:translateX(-100%);">168.0</div>
<div class="t c" style="left:1492.5px;top:871.3px;font-size:15px;color:#222;letter-spacing:0.15px;">6.4%</div>
<div class="t c" style="left:1595.5px;top:832.0px;font-size:15px;color:#222;letter-spacing:0.2px;">5.4%</div>
<div class="t c" style="left:1699.5px;top:832.0px;font-size:15px;color:#222;letter-spacing:0.2px;">1.6%</div>
<div class="t c" style="left:1595.5px;top:871.15px;font-size:15.3px;color:#222;letter-spacing:0.2px;">(60bps)</div>
<div class="t c" style="left:1699.5px;top:871.15px;font-size:15.3px;color:#222;letter-spacing:0.2px;">(17bps)</div>
<div class="t" style="left:626.5px;top:944.75px;font-size:15.5px;color:#222;letter-spacing:0.15px;">Δ NWC</div>
<div class="t" style="left:628.5px;top:984.75px;font-size:15.5px;color:#222;letter-spacing:0.2px;font-style:italic;">% revenue</div>
<div class="abs" style="left:783px;top:934px;width:161px;height:36px;border:1px solid #cfcfcf;border-radius:5px;background:#fff"></div>
<div class="t" style="left:796.5px;top:945.15px;font-size:13.3px;color:#111;letter-spacing:0px;-webkit-text-stroke:.3px #111;">Hardcodes</div>
<svg class="abs" style="left:928px;top:948.5px" width="11" height="8" viewBox="0 0 11 8"><path d="M1.300 1.500 L5.500 5.700 L9.700 1.500" fill="none" stroke="#111" stroke-width="2.100" stroke-linecap="round" stroke-linejoin="round"/></svg>
<div class="abs" style="left:953px;top:935px;width:89px;height:33.500px;border:1px solid #cfcfcf;border-radius:5px;background:#fff;overflow:hidden"><div class="abs" style="left:0;top:0;width:25px;height:33px;background:#eee;border-right:1px solid #cfcfcf"></div></div>
<div class="t c" style="left:965.5px;top:944.55px;font-size:15.5px;color:#666;letter-spacing:0px;">$</div>
<div class="t" style="left:1033.5px;top:944.55px;font-size:15.5px;color:#2f416f;letter-spacing:0.25px;transform:translateX(-100%);">108.1</div>
<div class="t c" style="left:997.5px;top:984.3px;font-size:15px;color:#222;letter-spacing:0.15px;">5.4%</div>
<div class="abs" style="left:1051px;top:935px;width:89px;height:33.500px;border:1px solid #cfcfcf;border-radius:5px;background:#fff;overflow:hidden"><div class="abs" style="left:0;top:0;width:25px;height:33px;background:#eee;border-right:1px solid #cfcfcf"></div></div>
<div class="t c" style="left:1063.5px;top:944.55px;font-size:15.5px;color:#666;letter-spacing:0px;">$</div>
<div class="t" style="left:1131.5px;top:944.55px;font-size:15.5px;color:#2f416f;letter-spacing:0.25px;transform:translateX(-100%);">43.7</div>
<div class="t c" style="left:1095.5px;top:984.3px;font-size:15px;color:#222;letter-spacing:0.15px;">2.0%</div>
<div class="abs" style="left:1149px;top:935px;width:89px;height:33.500px;border:1px solid #cfcfcf;border-radius:5px;background:#fff;overflow:hidden"><div class="abs" style="left:0;top:0;width:25px;height:33px;background:#eee;border-right:1px solid #cfcfcf"></div></div>
<div class="t c" style="left:1161.5px;top:944.55px;font-size:15.5px;color:#666;letter-spacing:0px;">$</div>
<div class="t" style="left:1229.5px;top:944.55px;font-size:15.5px;color:#2f416f;letter-spacing:0.25px;transform:translateX(-100%);">(23.6)</div>
<div class="t c" style="left:1193.5px;top:984.3px;font-size:15px;color:#222;letter-spacing:0.15px;">(1.0%)</div>
<div class="abs" style="left:1252px;top:935px;width:89px;height:33.500px;border:1px solid #cfcfcf;border-radius:5px;background:#fff;overflow:hidden"><div class="abs" style="left:0;top:0;width:25px;height:33px;background:#eee;border-right:1px solid #cfcfcf"></div></div>
<div class="t c" style="left:1264.5px;top:944.55px;font-size:15.5px;color:#666;letter-spacing:0px;">$</div>
<div class="t c" style="left:1296.5px;top:984.3px;font-size:15px;color:#222;letter-spacing:0.15px;">-</div>
<div class="abs" style="left:1350px;top:935px;width:89px;height:33.500px;border:1px solid #cfcfcf;border-radius:5px;background:#fff;overflow:hidden"><div class="abs" style="left:0;top:0;width:25px;height:33px;background:#eee;border-right:1px solid #cfcfcf"></div></div>
<div class="t c" style="left:1362.5px;top:944.55px;font-size:15.5px;color:#666;letter-spacing:0px;">$</div>
<div class="t c" style="left:1394.5px;top:984.3px;font-size:15px;color:#222;letter-spacing:0.15px;">-</div>
<div class="abs" style="left:1448px;top:935px;width:89px;height:33.500px;border:1px solid #cfcfcf;border-radius:5px;background:#fff;overflow:hidden"><div class="abs" style="left:0;top:0;width:25px;height:33px;background:#eee;border-right:1px solid #cfcfcf"></div></div>
<div class="t c" style="left:1460.5px;top:944.55px;font-size:15.5px;color:#666;letter-spacing:0px;">$</div>
<div class="t c" style="left:1492.5px;top:984.3px;font-size:15px;color:#222;letter-spacing:0.15px;">-</div>
<div class="t c" style="left:1595.5px;top:945.0px;font-size:15px;color:#222;letter-spacing:0.2px;">-</div>
<div class="t c" style="left:1699.5px;top:945.0px;font-size:15px;color:#222;letter-spacing:0.2px;">(100.0%)</div>
<div class="t c" style="left:1595.5px;top:984.15px;font-size:15.3px;color:#222;letter-spacing:0.2px;">(638bps)</div>
<div class="t c" style="left:1699.5px;top:984.15px;font-size:15.3px;color:#222;letter-spacing:0.2px;">97bps</div>
<svg class="abs" style="left:1900px;top:266px" width="13" height="11" viewBox="0 0 13 11"><path d="M6.500 1 L12.500 10 H.5 Z" fill="#8b8b8b"/></svg>
<div class="abs" style="left:1901px;top:284px;width:11px;height:691px;border-radius:6px;background:#8b8b8b"></div>
<svg class="abs" style="left:1900px;top:1009px" width="13" height="11" viewBox="0 0 13 11"><path d="M.5 1 H12.500 L6.500 10 Z" fill="#8b8b8b"/></svg>
<div class="abs" style="left:370px;top:958px;width:64px;height:64px;background:#133b75"></div>
<svg class="abs" style="left:370px;top:958px" width="64" height="64" viewBox="0 0 64 64"><path d="M27.69999999999999 20.899999999999977 Q30.12 29.48 38.69999999999999 31.899999999999977 Q30.12 34.32 27.69999999999999 42.89999999999998 Q25.28 34.32 16.69999999999999 31.899999999999977 Q25.28 29.48 27.69999999999999 20.899999999999977 Z M40.39999999999998 16.9 Q41.85 22.05 46.99999999999998 23.5 Q41.85 24.95 40.39999999999998 30.1 Q38.95 24.95 33.799999999999976 23.5 Q38.95 22.05 40.39999999999998 16.9 Z M38.5 36.00000000000002 Q39.73 40.37 44.1 41.60000000000002 Q39.73 42.83 38.5 47.200000000000024 Q37.27 42.83 32.9 41.60000000000002 Q37.27 40.37 38.5 36.00000000000002 Z" fill="#fff" stroke="#fff" stroke-width="1" stroke-linejoin="round"/></svg>
</div>
<!--MAIN_END-->
</div>

<!-- ================= LEFT PANEL ================= -->
<div id="left" class="abs">
<!--LEFT_START-->
<div class="abs" style="left:0;top:-261px">
<svg class="abs" style="left:323px;top:280px" width="15" height="15" viewBox="0 0 15 15"><path d="M1 1 L14 14 M14 1 L1 14" stroke="#555" stroke-width="1.300"/></svg>
<div class="t" style="left:12px;top:315px;font-size:17px;font-weight:700;color:#222;letter-spacing:.1px">Settings</div>
<div class="abs" style="left:12px;top:338.500px;width:327px;height:36px;border:1px solid #cfcfcf;border-radius:5px;background:#fafafa"></div>
<div class="abs" style="left:120px;top:339.500px;width:1px;height:34px;background:#cfcfcf"></div>
<div class="abs" style="left:230px;top:338.500px;width:109px;height:36px;border:1.500px solid #1d3c78;border-radius:0 5px 5px 0;background:#d9e9f9"></div>
<div class="t c" style="left:67px;top:350px;font-size:13px;color:#666">Months</div>
<div class="t c" style="left:175px;top:350px;font-size:13px;color:#666">Quarters</div>
<div class="t c" style="left:285px;top:350px;font-size:13px;color:#111;-webkit-text-stroke:.35px #111">Years</div>
<div class="t" style="left:24.5px;top:397.5px;font-size:13px;color:#2b2b2b;letter-spacing:0px">Last Fiscal Period (Actual):</div>
<div class="sel" style="left:257px;top:383.5px;width:82px;height:43.0px"></div><div class="t" style="left:271px;top:398.0px;font-size:13px;color:#111;-webkit-text-stroke:.25px #111">2024</div><svg class="abs" style="left:322.7px;top:401.2px" width="11" height="8" viewBox="0 0 11 8"><path d="M1.3 1.5 L5.5 5.7 L9.7 1.5" fill="none" stroke="#111" stroke-width="2.1" stroke-linecap="round" stroke-linejoin="round"/></svg>
<div class="t" style="left:24.5px;top:449.5px;font-size:13px;color:#2b2b2b;letter-spacing:0px">Currency</div>
<div class="sel" style="left:249px;top:435.5px;width:90px;height:43.0px"></div><div class="t" style="left:263.5px;top:450.25px;font-size:12.5px;color:#111;-webkit-text-stroke:.25px #111">USD | $</div><svg class="abs" style="left:322.7px;top:453.2px" width="11" height="8" viewBox="0 0 11 8"><path d="M1.3 1.5 L5.5 5.7 L9.7 1.5" fill="none" stroke="#111" stroke-width="2.1" stroke-linecap="round" stroke-linejoin="round"/></svg>
<div class="t" style="left:24.5px;top:501.6px;font-size:12.8px;color:#2b2b2b;letter-spacing:0px">Fiscal Yearend:</div>
<div class="sel" style="left:167px;top:487.5px;width:109px;height:43.0px"></div><div class="t" style="left:181px;top:501.8px;font-size:13.4px;color:#111;-webkit-text-stroke:.25px #111">December</div><svg class="abs" style="left:259.2px;top:505.2px" width="11" height="8" viewBox="0 0 11 8"><path d="M1.3 1.5 L5.5 5.7 L9.7 1.5" fill="none" stroke="#111" stroke-width="2.1" stroke-linecap="round" stroke-linejoin="round"/></svg>
<div class="sel" style="left:280px;top:487.5px;width:59px;height:43.0px"></div><div class="t" style="left:293.5px;top:502.0px;font-size:13px;color:#111;-webkit-text-stroke:.25px #111">31</div><svg class="abs" style="left:322.7px;top:505.2px" width="11" height="8" viewBox="0 0 11 8"><path d="M1.3 1.5 L5.5 5.7 L9.7 1.5" fill="none" stroke="#111" stroke-width="2.1" stroke-linecap="round" stroke-linejoin="round"/></svg>
<div class="t" style="left:24.5px;top:553.5px;font-size:13px;color:#2b2b2b;letter-spacing:0px">Units</div>
<div class="sel" style="left:232px;top:539.5px;width:107px;height:43.0px"></div><div class="t" style="left:246.5px;top:554.0px;font-size:13px;color:#111;-webkit-text-stroke:.25px #111">Millions</div><svg class="abs" style="left:322.7px;top:557.2px" width="11" height="8" viewBox="0 0 11 8"><path d="M1.3 1.5 L5.5 5.7 L9.7 1.5" fill="none" stroke="#111" stroke-width="2.1" stroke-linecap="round" stroke-linejoin="round"/></svg>
<div class="t" style="left:24.5px;top:604.0px;font-size:13px;color:#2b2b2b;letter-spacing:0px">Transpose Units</div>
<svg class="abs" style="left:120px;top:603.500px" width="14" height="14" viewBox="0 0 14 14"><circle cx="7" cy="7" r="5.600" fill="none" stroke="#333" stroke-width="1"/><path d="M7.600 3.300 L7.300 4.500 M6 6 H7.400 L6.500 10.300 H7.800" fill="none" stroke="#333" stroke-width="1.100"/></svg>
<div class="abs" style="left:257px;top:591px;width:82px;height:40px;border:1px solid #cfcfcf;border-radius:5px;background:#f7f7f7"></div>
<svg class="abs" style="left:266px;top:598px" width="20" height="12" viewBox="0 0 20 12"><path d="M18.500 6 H2 M6 2 L2 6 L6 10" fill="none" stroke="#5b82e0" stroke-width="1"/></svg>
<div class="t" style="left:285px;top:597.500px;font-size:12px;color:#222;-webkit-text-stroke:.3px #222">1</div>
<div class="t" style="left:303.500px;top:597.500px;font-size:12px;color:#222;letter-spacing:-.4px;-webkit-text-stroke:.3px #222">1,000</div>
<div class="t" style="left:264px;top:611px;font-size:12px;color:#222;letter-spacing:-.4px;-webkit-text-stroke:.3px #222">1,000</div>
<svg class="abs" style="left:305px;top:611.500px" width="20" height="12" viewBox="0 0 20 12"><path d="M1.500 6 H18 M14 2 L18 6 L14 10" fill="none" stroke="#5b82e0" stroke-width="1"/></svg>
<div class="t" style="left:325px;top:611px;font-size:12px;color:#222;-webkit-text-stroke:.3px #222">1</div>
<div class="t" style="left:24.5px;top:647.5px;font-size:13px;color:#2b2b2b;letter-spacing:0.4px">Undo/Redo</div>
<div class="abs" style="left:281px;top:641px;width:58px;height:28px;border:1px solid #cfcfcf;border-radius:5px;background:#f7f7f7"></div>
<svg class="abs" style="left:287px;top:646px" width="18" height="18" viewBox="0 0 18 18"><path d="M6 2.500 L2.500 6 L6 9.500 M2.500 6 H11 A4.500 4.500 0 0 1 11 15 H9.500" fill="none" stroke="#808080" stroke-width="1.100" stroke-linecap="round" stroke-linejoin="round"/></svg>
<svg class="abs" style="left:315px;top:646px" width="18" height="18" viewBox="0 0 18 18"><path d="M12 2.500 L15.500 6 L12 9.500 M15.500 6 H7 A4.500 4.500 0 0 0 7 15 H8.500" fill="none" stroke="#808080" stroke-width="1.100" stroke-linecap="round" stroke-linejoin="round"/></svg>
<div class="t" style="left:24.5px;top:694.5px;font-size:13px;color:#2b2b2b;letter-spacing:0.05px">Restart Op Model</div>
<div class="abs" style="left:289px;top:685px;width:50px;height:34px;border:1px solid #cfcfcf;border-radius:5px;background:#fff"></div>
<svg class="abs" style="left:305px;top:692.200px" width="18" height="18" viewBox="0 0 18 18"><path d="M8.600 4.700 A5.400 5.400 0 1 1 4.200 7.300" fill="none" stroke="#111" stroke-width="1.500"/><path d="M6.200 5 L9.400 2.300 V7.700 Z" fill="#111"/></svg>
<div class="abs" style="left:0;top:1005px;width:355px;height:19px;background:#f9f9f9"></div>
<div class="t" style="left:37px;top:999.300px;font-size:10.500px;color:#222;letter-spacing:.05px;-webkit-text-stroke:.35px #222">Shortcuts</div>
<svg class="abs" style="left:1px;top:1008px" width="11" height="13" viewBox="0 0 11 13"><path d="M10 0.500 V12.500 L1 6.500 Z" fill="#8b8b8b"/></svg>
<div class="abs" style="left:19px;top:1009px;width:312px;height:11px;border-radius:6px;background:#8b8b8b"></div>
<svg class="abs" style="left:339px;top:1008px" width="11" height="13" viewBox="0 0 11 13"><path d="M1 0.500 V12.500 L10 6.500 Z" fill="#8b8b8b"/></svg>
<div class="abs" style="left:8.500px;top:991.500px;width:25.500px;height:21.500px;border:1px solid #d0d0d0;border-radius:5px;background:linear-gradient(#fdfdfd,#e6e6e6);box-shadow:0 1px 4px rgba(0,0,0,.3)"></div>
<div class="t c" style="left:21px;top:997.300px;font-size:12px;color:#666">Alt</div>
</div>
<!--LEFT_END-->
</div>
<!--OVER_START-->
<!-- gear tab -->
<div class="abs" style="left:355px;top:276px;width:31px;height:30px;border:1px solid #c6c6c6;border-left:0;border-radius:0 5px 5px 0;background:#fff;box-shadow:2px 1px 4px rgba(0,0,0,.10)"></div>
<div class="abs" style="left:354px;top:277px;width:3px;height:28px;background:#fff"></div>
<svg class="abs" style="left:362px;top:282px" width="18" height="18" viewBox="0 0 18 18">
<circle cx="9" cy="9" r="6.200" fill="none" stroke="#8a8a8a" stroke-width="1"/>
<circle cx="9" cy="9" r="7.300" fill="none" stroke="#8a8a8a" stroke-width="1.500" stroke-dasharray="1.000 1.293"/>
<path d="M8.300 9 H15 M8.300 9 L5.300 3.900 M8.300 9 L5.300 14.100" stroke="#8a8a8a" stroke-width="1" fill="none"/>
</svg>
<!--OVER_END-->

<!-- ================= BOTTOM ================= -->
<div id="botline" class="abs"></div>
<div id="bottom" class="abs">
<!--BOTTOM_START-->
<div class="abs" style="left:0;top:-1025px;width:1914px;height:1136px">
<div class="abs" style="left:532px;top:1037px;width:160px;height:43px;border:1.500px solid #222;border-radius:5px;background:#fff"></div>
<div class="t c" style="left:612px;top:1050.700px;font-size:15.500px;color:#222;letter-spacing:.2px">Back</div>
<div class="abs" style="left:1228px;top:1037px;width:160px;height:43px;border-radius:5px;background:#2a3c78"></div>
<div class="t c" style="left:1308px;top:1050.700px;font-size:15.500px;color:#fff;letter-spacing:.3px;-webkit-text-stroke:.4px #fff">Next</div>
</div>
<!--BOTTOM_END-->
</div>
<!--FLOAT_START-->
<!-- chat button -->
<div class="abs" style="left:1836px;top:1058px;width:64px;height:64px;background:#133b75;box-shadow:0 2px 12px rgba(0,0,0,.18)"></div>
<div class="abs" style="left:1852px;top:1080px;width:32px;height:16.500px;border-radius:8.500px;background:#fff"></div>
<svg class="abs" style="left:1870px;top:1098px" width="9" height="8" viewBox="0 0 9 8"><path d="M.8 .8 H8 V7.300 Z" fill="#fff"/></svg>
<!-- mouse cursor -->
<svg class="abs" style="left:1785px;top:448px" width="16" height="22" viewBox="0 0 16 22"><path d="M1.500 1.500 V17.500 L5.300 14 L8 20 L10.600 18.900 L8 13.200 H13.200 Z" fill="#fff" stroke="#111" stroke-width="1.200" stroke-linejoin="miter"/></svg>
<!--FLOAT_END-->
</div>
</body>
</html>
